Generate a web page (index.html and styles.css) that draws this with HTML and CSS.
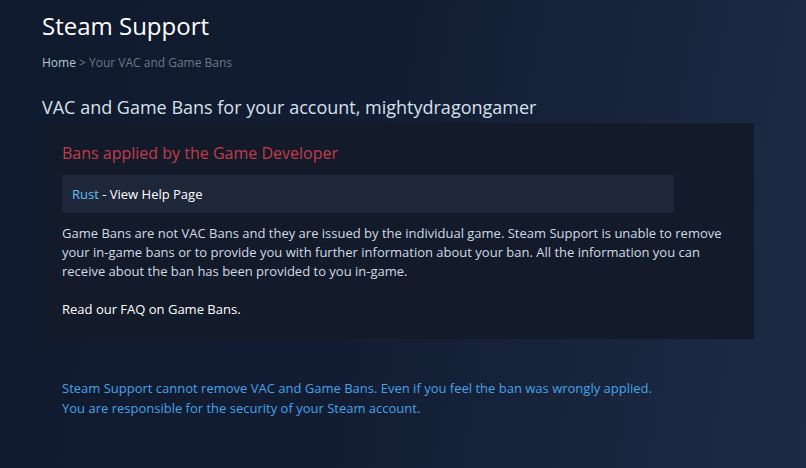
FILE: index.html
```html
<!DOCTYPE html>
<html>
<head>
<meta charset="utf-8">
<link rel="stylesheet" href="styles.css">
</head>
<body>
<div class="page">
  <h1 class="title">Steam Support</h1>
  <div class="crumbs"><span class="crumb-home">Home</span> &gt; Your VAC and Game Bans</div>
  <h2 class="heading">VAC and Game Bans for your account, mightydragongamer</h2>
  <div class="panel">
    <div class="panel-title">Bans applied by the Game Developer</div>
    <div class="game-row"><span class="game-name">Rust</span> - View Help Page</div>
    <p class="panel-text">Game Bans are not VAC Bans and they are issued by the individual game. Steam Support is unable to remove your in-game bans or to provide you with further information about your ban. All the information you can receive about the ban has been provided to you in-game.</p>
    <p class="panel-link">Read our FAQ on Game Bans.</p>
  </div>
  <div class="notice">
    <div>Steam Support cannot remove VAC and Game Bans. Even if you feel the ban was wrongly applied.</div>
    <div>You are responsible for the security of your Steam account.</div>
  </div>
</div>
</body>
</html>
```
FILE: styles.css
```css
html, body {
  margin: 0;
  padding: 0;
  height: 100%;
}
body {
  background: linear-gradient(100deg, #101a2e 0%, #121d33 45%, #1d2b45 100%);
  font-family: "Open Sans", "Liberation Sans", sans-serif;
  color: #c6d4df;
}
.page {
  width: 712px;
  padding: 0 0 0 42px;
}
.title {
  margin: 0;
  padding-top: 10px;
  font-size: 24px;
  font-weight: 400;
  line-height: 32px;
  color: #ffffff;
}
.crumbs {
  margin-top: 13px;
  font-size: 12px;
  line-height: 16px;
  color: #6b7886;
}
.crumb-home {
  color: #b8c6d3;
}
.heading {
  margin: 24px 0 0 0;
  font-size: 18px;
  font-weight: 400;
  line-height: 24px;
  color: #d6e0ea;
}
.panel {
  margin-top: 4px;
  background: #131a2a;
  padding: 20px 20px 22px 20px;
  height: 174px;
}
.panel-title {
  margin-top: -1px;
  font-size: 16px;
  line-height: 22px;
  color: #c23d4a;
}
.game-row {
  margin-top: 11px;
  width: 602px;
  height: 38px;
  padding-left: 10px;
  line-height: 38px;
  background: #1e2739;
  font-size: 13px;
  color: #ffffff;
}
.game-name {
  color: #66c0f4;
}
.panel-text {
  margin: 11px 0 0 0;
  font-size: 13px;
  line-height: 19px;
  color: #d0dbe5;
}
.panel-link {
  margin: 19px 0 0 0;
  font-size: 13px;
  line-height: 19px;
  color: #ffffff;
}
.notice {
  margin-top: 39px;
  padding-left: 20px;
  font-size: 13px;
  line-height: 20px;
  color: #45a3e6;
}
```
